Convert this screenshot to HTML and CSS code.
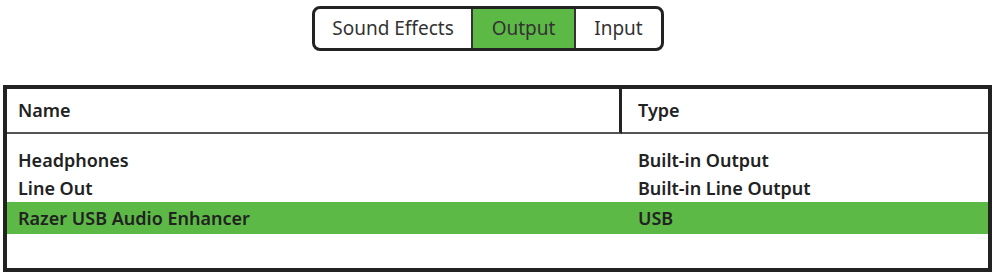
FILE: index.html
```html
<html lang="en">

<head>
    <meta charset="utf-8" />
    <title>Output devices</title>

    <link rel="stylesheet" href="styles.css">
</head>

<body>

<div class="onglets">
    <div class="onglet">Sound Effects</div>
    <div class="onglet actif">Output</div>
    <div class="onglet">Input</div>
</div>

<table class="peripheriques">
    <thead>
        <tr>
            <th class="col-nom">Name</th>
            <th>Type</th>
        </tr>
    </thead>
    <tbody>
        <tr class="espace"><td></td><td></td></tr>
        <tr>
            <td>Headphones</td>
            <td>Built-in Output</td>
        </tr>
        <tr>
            <td>Line Out</td>
            <td>Built-in Line Output</td>
        </tr>
        <tr class="choisi">
            <td>Razer USB Audio Enhancer</td>
            <td>USB</td>
        </tr>
        <tr class="vide"><td></td><td></td></tr>
    </tbody>
</table>

</body>
</html>
```

FILE: styles.css
```css
body {
    margin: 0;
    background: white;
    font-family: 'Noto Sans', 'Open Sans', sans-serif;
    color: #222;
}

div.onglets {
    display: flex;
    width: 346px;
    height: 39px;
    margin: 6px 0 0 312px;
    border: 3px solid #222;
    border-radius: 8px;
    overflow: hidden;
}

div.onglet {
    display: flex;
    align-items: center;
    justify-content: center;
    font-size: 19px;
    color: #333;
    padding-bottom: 1px;
}

div.onglet:nth-child(1) {
    width: 156px;
}

div.onglet:nth-child(2) {
    width: 101px;
}

div.onglet:nth-child(3) {
    flex: 1;
}

div.onglet.actif {
    background: #5cb946;
    border-left: 2px solid #333;
    border-right: 2px solid #333;
}

table.peripheriques {
    margin: 34px 0 0 3px;
    width: 989px;
    border: 4px solid #222;
    border-spacing: 0;
    font-size: 18px;
    font-weight: 600;
}

table.peripheriques th {
    text-align: left;
    font-weight: 600;
    height: 45px;
    padding: 0 0 2px 16px;
    border-bottom: 2px solid #555;
}

table.peripheriques th.col-nom {
    width: 601px;
    padding-left: 11px;
    border-right: 3px solid #222;
}

table.peripheriques td {
    padding: 0 0 0 16px;
    height: 28px;
}

table.peripheriques td:first-child {
    padding-left: 11px;
}

table.peripheriques tr.espace td {
    height: 12px;
}

table.peripheriques tr.choisi td {
    height: 32px;
    background: #5cb946;
}

table.peripheriques tr.vide td {
    height: 34px;
}
```
